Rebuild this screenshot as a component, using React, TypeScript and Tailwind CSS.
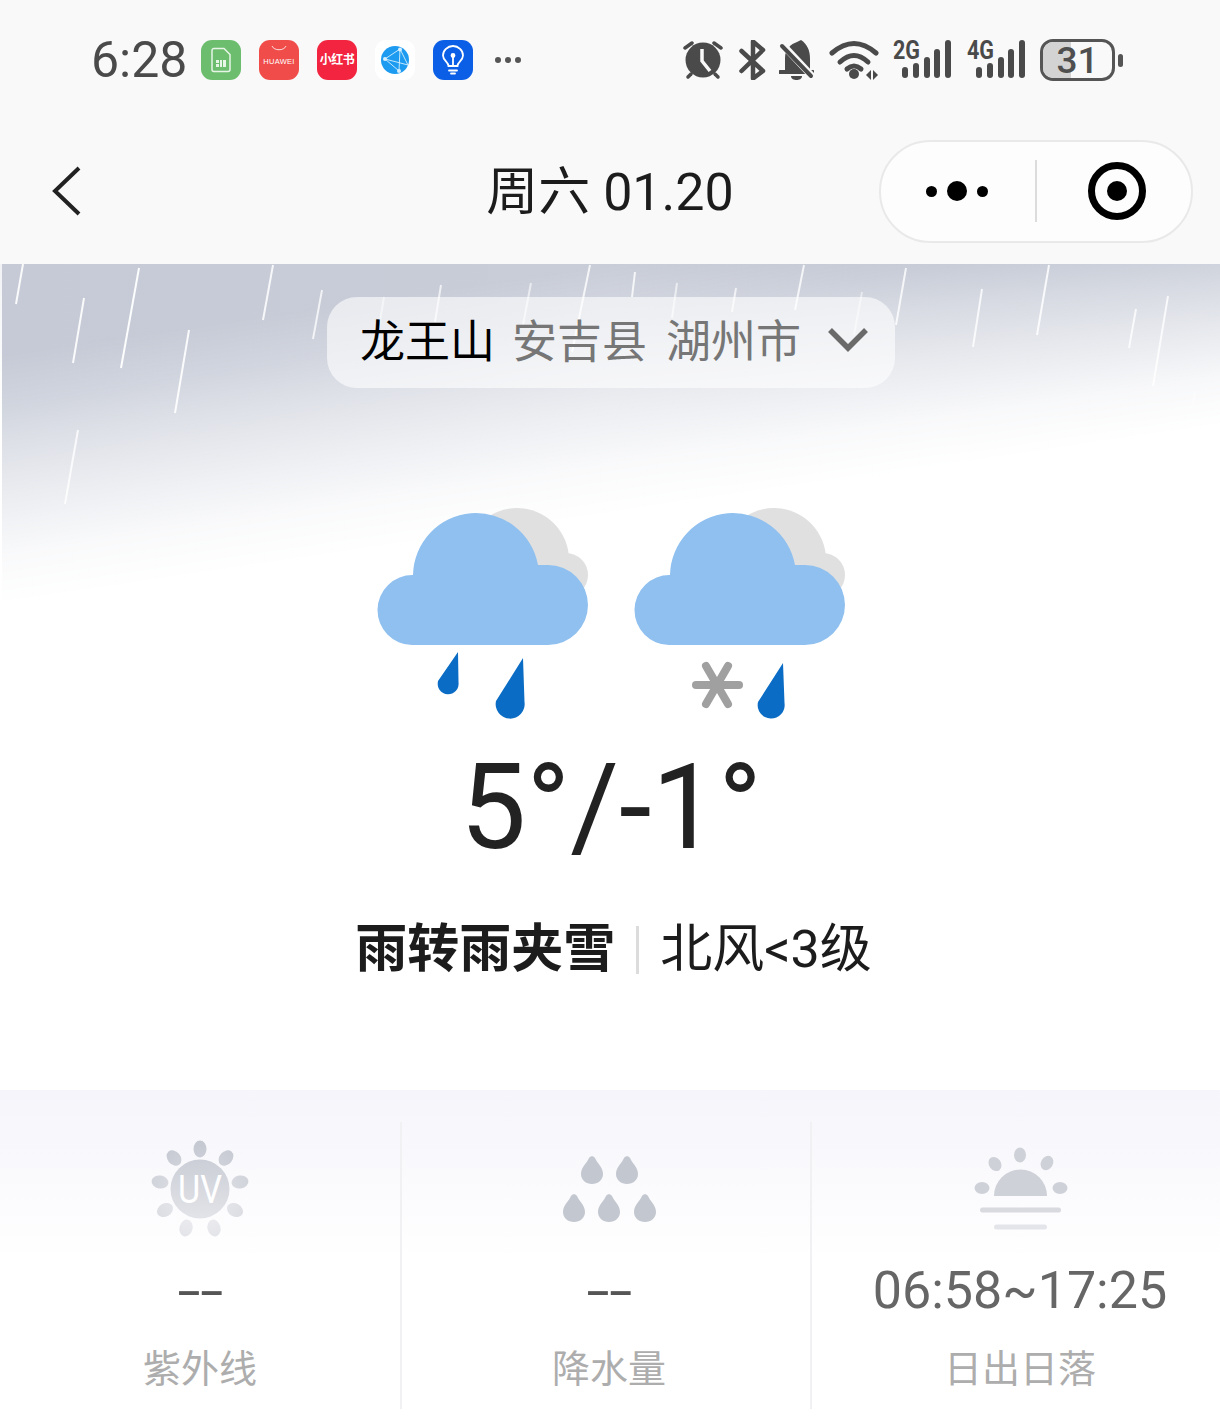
import React from "react";

const INK = "#4a4a4a";

const RAIN: [number, number, number, number, number][] = [
  [23, 0, 16, 40, 0.9],
  [84, 34, 73, 99, 0.9],
  [139, 4, 121, 104, 0.95],
  [189, 66, 175, 149, 0.9],
  [78, 166, 65, 240, 0.8],
  [273, 1, 263, 56, 0.85],
  [322, 26, 313, 75, 0.75],
  [384, 33, 377, 75, 0.5],
  [441, 21, 435, 58, 0.7],
  [531, 19, 523, 61, 0.6],
  [590, 1, 572, 88, 0.8],
  [635, 8, 632, 33, 0.8],
  [677, 19, 672, 54, 0.6],
  [736, 24, 732, 48, 0.7],
  [804, 1, 795, 46, 0.8],
  [862, 28, 854, 71, 0.5],
  [906, 4, 896, 61, 0.8],
  [982, 25, 973, 83, 0.8],
  [1049, 1, 1037, 71, 0.85],
  [1136, 45, 1129, 84, 0.8],
  [1168, 32, 1153, 122, 0.8],
  [1195, 128, 1192, 144, 0.4],
];

function Drop({ tx, ty, cx, cy, r }: { tx: number; ty: number; cx: number; cy: number; r: number }) {
  return <path d={`M${tx} ${ty}L${cx - r + 0.5} ${cy - 3}A${r} ${r} 0 1 0 ${cx + r} ${cy - 2}Z`} fill="#0a6cc4" />;
}

function CloudBase() {
  return (
    <>
      <circle cx="140" cy="52" r="52" fill="#e0e0e0" />
      <circle cx="189" cy="67" r="22" fill="#e0e0e0" />
      <path d="M35 137A35 35 0 0 1 36 67A63 63 0 0 1 161 57H171A40 40 0 0 1 171 137Z" fill="#8fc0ef" />
    </>
  );
}

function RainIcon() {
  return (
    <svg width="212" height="212" viewBox="0 0 212 212">
      <CloudBase />
      <Drop tx={81} ty={144} cx={71} cy={176} r={10.5} />
      <Drop tx={146} ty={150} cx={133} cy={196} r={14.5} />
    </svg>
  );
}

function SleetIcon() {
  return (
    <svg width="212" height="212" viewBox="0 0 212 212">
      <CloudBase />
      <g stroke="#a0a0a0" strokeWidth="8" strokeLinecap="round">
        <path d="M62 177H105" />
        <path d="M72 158L94 196" />
        <path d="M94 158L72 196" />
      </g>
      <Drop tx={149} ty={155} cx={137} cy={197} r={13.5} />
    </svg>
  );
}

function UvIcon() {
  const rays = [
    [50, 10, 0],
    [76, 19, 40],
    [90, 43, 80],
    [85, 71, 120],
    [64, 89, 165],
    [36, 89, 195],
    [15, 71, 240],
    [10, 43, 280],
    [24, 19, 320],
  ];
  return (
    <svg width="100" height="100" viewBox="0 0 100 100">
      <defs>
        <linearGradient id="uvFade" x1="0" y1="0" x2="0" y2="100" gradientUnits="userSpaceOnUse">
          <stop offset="0" stopColor="#c3c7d0" />
          <stop offset="1" stopColor="#ebebef" />
        </linearGradient>
      </defs>
      {rays.map(([x, y, a]) => (
        <ellipse key={a} cx={x} cy={y} rx="6.5" ry="8.5" transform={`rotate(${a} ${x} ${y})`} fill="url(#uvFade)" />
      ))}
      <circle cx="50" cy="50" r="29.5" fill="url(#uvFade)" />
      <text x="50" y="64" textAnchor="middle" fontSize="38" fontWeight="400" fill="#fff" textLength="44" lengthAdjust="spacingAndGlyphs">
        UV
      </text>
    </svg>
  );
}

function PrecipIcon() {
  const spots = [
    [33, 31],
    [68, 31],
    [15, 69],
    [50, 69],
    [86, 69],
  ];
  return (
    <svg width="100" height="100" viewBox="0 0 100 100">
      <defs>
        <linearGradient id="dropFade" x1="0" y1="15" x2="0" y2="85" gradientUnits="userSpaceOnUse">
          <stop offset="0" stopColor="#c3c7d0" />
          <stop offset="1" stopColor="#dfe0e5" />
        </linearGradient>
      </defs>
      {spots.map(([x, y]) => (
        <path
          key={`${x}-${y}`}
          transform={`translate(${x} ${y})`}
          d="M-3-12C-1.500-14.500 1.500-14.500 3-12C5-7 11-3 11 4C11 10 6 14 0 14C-6 14-11 10-11 4C-11-3-5-7-3-12Z"
          fill="url(#dropFade)"
        />
      ))}
    </svg>
  );
}

function SunIcon() {
  return (
    <svg width="100" height="100" viewBox="0 0 100 100">
      <g fill="#cfd1d9">
        <ellipse cx="50" cy="16" rx="6" ry="7.5" />
        <ellipse cx="25" cy="25" rx="6" ry="7.5" transform="rotate(-35 25 25)" />
        <ellipse cx="77" cy="24" rx="6" ry="7.500" transform="rotate(30 77 24)" />
        <ellipse cx="12" cy="49" rx="7.5" ry="6" />
        <ellipse cx="90" cy="49" rx="7.5" ry="6" />
        <path d="M24 57A26.500 26.500 0 0 1 77 57Z" />
      </g>
      <rect x="10" y="68.500" width="81" height="5" rx="2.500" fill="#d9dae0" />
      <rect x="24" y="85.500" width="53" height="5" rx="2.500" fill="#e4e5ea" />
    </svg>
  );
}

function AlarmGlyph() {
  return (
    <svg width="40" height="40" viewBox="0 0 40 40" fill="none">
      <circle cx="20" cy="20" r="17.500" fill={INK} />
      <path d="M19 9V21L27 31" stroke="#f9f9f9" strokeWidth="3.500" />
      <g stroke={INK} strokeWidth="3.500" strokeLinecap="round">
        <path d="M2 8L9 3" />
        <path d="M31 3L38 8" />
        <path d="M5 37L8 34" />
        <path d="M32 34L35 37" />
      </g>
    </svg>
  );
}

function BluetoothGlyph() {
  return (
    <svg width="30" height="40" viewBox="0 0 30 40" fill="none">
      <path d="M2.500 11L24 31L14 38.500V1.500L24 10L2.500 31" stroke={INK} strokeWidth="4.500" strokeLinecap="round" strokeLinejoin="round" />
    </svg>
  );
}

function BellOffGlyph() {
  return (
    <svg width="35" height="40" viewBox="0 0 35 40" fill="none">
      <path d="M6 32V18C6 9 12 4 18 2L22 0C28 4 31 10 31 19V32Z" fill={INK} />
      <path d="M1 32H34" stroke={INK} strokeWidth="4" strokeLinecap="round" />
      <path d="M12 36H23C23 39 20 40 17.500 40C15 40 12 39 12 36Z" fill={INK} />
      <path d="M2 3L33 36" stroke="#f9f9f9" strokeWidth="7" />
      <path d="M3 6L32 36" stroke={INK} strokeWidth="4" strokeLinecap="round" />
    </svg>
  );
}

function WifiGlyph() {
  return (
    <svg width="50" height="40" viewBox="0 0 50 40" fill="none">
      <g stroke={INK} strokeWidth="5" strokeLinecap="round">
        <path d="M3 13Q25-6 47 13" />
        <path d="M11 22Q25 9 39 22" />
        <path d="M18 29Q25 23 32 29" />
      </g>
      <circle cx="25" cy="34" r="5" fill={INK} />
      <path d="M37 35L42 30V40Z" fill={INK} />
      <path d="M44 30L49 35L44 40Z" fill={INK} />
    </svg>
  );
}

function Signal({ label }: { label: string }) {
  const bars = [
    [9, 27],
    [20, 23],
    [31, 17],
    [41, 9],
    [52, 0],
  ];
  return (
    <svg width="59" height="48" viewBox="0 -4 59 48">
      <text x="0" y="19" fontSize="25" fontWeight="700" fill={INK} textLength="27" lengthAdjust="spacingAndGlyphs">
        {label}
      </text>
      {bars.map(([x, y]) => (
        <rect key={x} x={x} y={y} width="6" height={38 - y} rx="3" fill={INK} />
      ))}
    </svg>
  );
}

function Battery() {
  return (
    <div className="flex items-center">
      <div className="relative flex h-[42px] w-[75px] items-center justify-center overflow-hidden rounded-[13px] border-[3px] border-[#555]">
        <div className="absolute inset-y-0 left-0 w-[28px] bg-[#d3d3d3]" />
        <span className="relative text-[37px] leading-none font-medium text-[#4f4f4f]">31</span>
      </div>
      <div className="ml-[3px] h-[13px] w-[5px] rounded-full bg-[#555]" />
    </div>
  );
}

function AppIcons() {
  return (
    <div className="flex items-center gap-[18px]">
      <div className="flex h-10 w-10 items-center justify-center rounded-[11px] bg-[#6dbd6f]">
        <svg width="22" height="26" viewBox="0 0 22 26" fill="none" stroke="#e6f5e6" strokeWidth="1.500">
          <path d="M2 3.500A2 2 0 0 1 4 1.500H14L20 7.500V22.500A2 2 0 0 1 18 24.500H4A2 2 0 0 1 2 22.500Z" />
          <rect x="6" y="13" width="10" height="7" fill="#e6f5e6" stroke="none" />
          <path d="M9.500 13V20M12.500 13V20M6 16.500H10" stroke="#6dbd6f" strokeWidth="1" />
        </svg>
      </div>
      <div className="flex h-10 w-10 flex-col items-center rounded-[11px] bg-[#f04c4a]">
        <svg width="16" height="9" viewBox="0 0 16 9" fill="none" className="mt-[5px]">
          <path d="M1 1C3 6 13 6 15 1" stroke="#fde0de" strokeWidth="1" />
        </svg>
        <span className="mt-[4px] font-['Liberation_Sans',sans-serif] text-[7.500px] leading-none tracking-[0.3px] text-white">HUAWEI</span>
      </div>
      <div className="flex h-10 w-10 items-center justify-center rounded-[11px] bg-[#f2243f]">
        <span className="text-[12px] leading-none font-bold tracking-[-0.5px] text-white">小红书</span>
      </div>
      <div className="flex h-10 w-10 items-center justify-center rounded-[11px] bg-white">
        <svg width="30" height="30" viewBox="0 0 30 30" fill="none">
          <circle cx="15" cy="15" r="14" fill="#1d9bf0" />
          <path d="M20 4L5 14L19 26M20 4L19 26M5 14L28 20M20 4L28 20" stroke="#d8effd" strokeWidth="0.900" />
          <circle cx="20" cy="4.500" r="2" fill="#d8effd" />
          <circle cx="5" cy="14" r="2" fill="#d8effd" />
          <circle cx="19" cy="26" r="2" fill="#d8effd" />
        </svg>
      </div>
      <div className="flex h-10 w-10 items-center justify-center rounded-[11px] bg-[#0b5fe6]">
        <svg width="24" height="30" viewBox="0 0 24 30" fill="none" stroke="#fff" strokeWidth="1.800" strokeLinecap="round">
          <path d="M7.500 21C7.500 17 2 15.500 2 10.500A10 9.500 0 0 1 22 10.500C22 15.500 16.500 17 16.500 21Z" />
          <path d="M8 25.500H16M10 28.500H14M12 21V12" />
          <circle cx="12" cy="10.500" r="1.500" fill="#fff" />
        </svg>
      </div>
    </div>
  );
}

function StatusBar() {
  return (
    <div className="flex h-[120px] items-center justify-between pr-[97px] pl-[91px]">
      <div className="flex items-center">
        <span className="w-[110px] text-[50px] leading-none text-[#4a4a4a]">6:28</span>
        <AppIcons />
        <div className="ml-[22px] flex gap-[4px]">
          <i className="h-[6px] w-[6px] rounded-full bg-[#555]" />
          <i className="h-[6px] w-[6px] rounded-full bg-[#555]" />
          <i className="h-[6px] w-[6px] rounded-full bg-[#555]" />
        </div>
      </div>
      <div className="flex items-center">
        <AlarmGlyph />
        <div className="ml-[16px] flex"><BluetoothGlyph /></div>
        <div className="ml-[10px] flex"><BellOffGlyph /></div>
        <div className="ml-[15px] flex"><WifiGlyph /></div>
        <div className="ml-[14px] flex"><Signal label="2G" /></div>
        <div className="ml-[15px] flex"><Signal label="4G" /></div>
        <div className="ml-[14px]"><Battery /></div>
      </div>
    </div>
  );
}

function NavBar() {
  return (
    <div className="grid h-[144px] grid-cols-[1fr_auto_1fr] items-center pb-[2px]">
      <div className="pl-[50px]">
        <svg width="34" height="54" viewBox="0 0 34 54" fill="none">
          <path d="M29 4L5 27L29 50" stroke="#222" strokeWidth="4" />
        </svg>
      </div>
      <h1 className="mt-[3px] text-[52px] leading-none font-normal text-[#1c1c1c]">周六 01.20</h1>
      <div className="flex justify-end pr-[27px]">
        <div className="flex h-[103px] w-[314px] items-center rounded-full border-2 border-[#e9e9e9] bg-[#fdfdfd]">
          <div className="flex w-[154px] items-center justify-end gap-[10px] pr-[47px]">
            <i className="h-[11px] w-[11px] rounded-full bg-black" />
            <i className="h-5 w-5 rounded-full bg-black" />
            <i className="h-[11px] w-[11px] rounded-full bg-black" />
          </div>
          <div className="h-[62px] w-[2px] bg-[#dcdcdc]" />
          <div className="flex flex-1 justify-center pl-[5px]">
            <svg width="60" height="60" viewBox="0 0 60 60" fill="none">
              <circle cx="30" cy="30" r="25.500" stroke="#000" strokeWidth="7" />
              <circle cx="30" cy="30" r="10" fill="#000" />
            </svg>
          </div>
        </div>
      </div>
    </div>
  );
}

function Hero() {
  return (
    <div className="relative flex h-[826px] flex-col items-center border-l-2 border-white/70 bg-[linear-gradient(171.6deg,transparent_9%,rgba(255,255,255,0.2)_14%,rgba(255,255,255,0.42)_18%,rgba(255,255,255,0.65)_23%,rgba(255,255,255,0.9)_29%,#fff_34%),linear-gradient(90deg,#c5cad6,#c9cdd8_50%,#aeb5c5)]">
      <svg className="absolute top-0 -left-[2px]" width="1220" height="260" viewBox="0 0 1220 260" fill="none">
        {RAIN.map(([x1, y1, x2, y2, o]) => (
          <line key={`${x1}-${y1}`} x1={x1} y1={y1} x2={x2} y2={y2} stroke="#fff" strokeWidth="2" strokeOpacity={o} />
        ))}
      </svg>

      <div className="relative mt-[33px] flex h-[91px] w-[568px] items-center rounded-[30px] bg-white/60 pr-[26px] pl-[33px]">
        <span className="text-[45px] leading-none text-black">龙王山</span>
        <span className="ml-[17px] text-[45px] leading-none text-[#767676]">安吉县</span>
        <span className="ml-[19px] text-[45px] leading-none text-[#767676]">湖州市</span>
        <svg className="mb-[5px] ml-auto" width="42" height="28" viewBox="0 0 42 28" fill="none">
          <path d="M3 4L21 22L39 4" stroke="#6a6a6a" strokeWidth="5.500" />
        </svg>
      </div>

      <div className="relative mt-[120px] flex gap-[45px]">
        <RainIcon />
        <SleetIcon />
      </div>

      <div className="mt-[13px] flex h-[150px] items-center text-[118px] leading-none text-[#222]">5°/-1°</div>

      <div className="mt-[38px] flex h-[58px] items-center pl-[5px] text-[#1c1c1c]">
        <span className="text-[52px] leading-none font-bold">雨转雨夹雪</span>
        <i className="mx-[21px] h-12 w-[3px] bg-[#dcdcdc]" />
        <span className="text-[52px] leading-none">北风&lt;3级</span>
      </div>
    </div>
  );
}

function Metric({ icon, value, label, className }: { icon: React.ReactNode; value: string; label: string; className: string }) {
  const empty = value === "--";
  return (
    <div className={`flex h-[287px] flex-col items-center pt-[17px] ${className}`}>
      {icon}
      <div className="mt-[22px] flex h-[60px] items-center text-[52px] leading-none text-[#666]">
        {empty ? <span className="mt-[2px] scale-x-[1.6] text-[#555]">--</span> : value}
      </div>
      <div className="mt-[25px] text-[38px] leading-[46px] text-[#adadad]">{label}</div>
    </div>
  );
}

export default function App() {
  return (
    <div className="min-h-[1420px] w-[1220px] bg-white font-[Roboto,'Noto_Sans_CJK_SC',sans-serif]">
      <div className="bg-[#f9f9f9]">
        <StatusBar />
        <NavBar />
      </div>
      <Hero />
      {/* metric strip */}
      <div className="grid grid-cols-[402px_410px_408px] bg-[linear-gradient(180deg,#f5f5fb,#fff_170px)] pt-[32px]">
        <Metric icon={<UvIcon />} value="--" label="紫外线" className="border-r-2 border-[#f1f1f4]" />
        <Metric icon={<PrecipIcon />} value="--" label="降水量" className="border-r-2 border-[#f1f1f4] pl-[6px]" />
        <Metric icon={<SunIcon />} value="06:58~17:25" label="日出日落" className="pl-[8px]" />
      </div>
    </div>
  );
}
